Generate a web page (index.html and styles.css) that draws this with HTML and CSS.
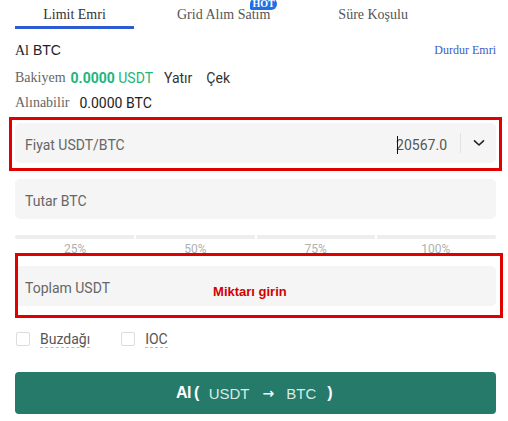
FILE: index.html
```html
<!DOCTYPE html>
<html lang="tr">
<head>
<meta charset="utf-8">
<title>Limit Emri</title>
<link rel="stylesheet" href="styles.css">
</head>
<body>
<div class="page">
  <div class="tabs">
    <div class="tab active">Limit Emri</div>
    <div class="tab tab-grid"><span class="tab-label">Grid Alım Satım<span class="hot">HOT</span></span></div>
    <div class="tab tab-time">Süre Koşulu</div>
  </div>

  <div class="row head-row">
    <span class="title"><span class="serif">Al</span> BTC</span>
    <span class="stop">Durdur Emri</span>
  </div>

  <div class="row bal-row">
    <span class="label">Bakiyem</span>
    <span class="green"><b>0.0000</b> USDT</span>
    <span class="act act-dep">Yatır</span>
    <span class="act act-wd">Çek</span>
  </div>

  <div class="row avail-row">
    <span class="label">Alınabilir</span>
    <span class="val">0.0000 BTC</span>
  </div>

  <div class="field field-price">
    <span class="ph">Fiyat USDT/BTC</span>
    <span class="price-val"><span class="caret"></span>20567.0</span>
    <span class="divider"></span>
    <svg class="chev" width="12" height="8" viewBox="0 0 12 8"><path d="M1.5 1.8 L6 6 L10.5 1.8" fill="none" stroke="#222" stroke-width="1.6" stroke-linecap="round" stroke-linejoin="round"/></svg>
  </div>

  <div class="field field-amount">
    <span class="ph">Tutar BTC</span>
  </div>

  <div class="slider">
    <div class="track"><span></span><span></span><span></span><span></span></div>
    <div class="marks"><span>25%</span><span>50%</span><span>75%</span><span>100%</span></div>
  </div>

  <div class="field field-total">
    <span class="ph">Toplam USDT</span>
    <span class="hint">Miktarı girin</span>
  </div>

  <div class="opts">
    <label class="opt"><span class="box"></span><span class="opt-text">Buzdağı</span></label>
    <label class="opt"><span class="box"></span><span class="opt-text">IOC</span></label>
  </div>

  <button class="buy"><b>Al</b><b class="paren">(</b><span class="coin">USDT</span><span class="arrow">→</span><span class="coin coin-b">BTC</span><b class="paren paren-r">)</b></button>

  <div class="mark mark-price"></div>
  <div class="mark mark-total"></div>
</div>
</body>
</html>
```

FILE: styles.css
```css
* { box-sizing: border-box; }
html, body { margin: 0; padding: 0; background: #fff; }
body { font-family: Roboto, "Liberation Sans", Arial, sans-serif; color: #333; }

.page {
  position: relative;
  width: 508px;
  height: 421px;
  padding: 0 12px 0 15px;
  overflow: hidden;
}

.tabs {
  display: flex;
  height: 29px;
  font-family: "Liberation Serif", "Times New Roman", serif;
  font-size: 14px;
}
.tab {
  padding-top: 4px;
  line-height: 22px;
  color: #555;
  white-space: nowrap;
}
.tab.active {
  width: 119px;
  text-align: center;
  color: #333;
  border-bottom: 3px solid #2c5bd2;
  height: 29px;
}
.tab-grid { margin-left: 43px; }
.tab-label { position: relative; }
.hot {
  position: absolute;
  left: 73px;
  top: -9px;
  width: 27px;
  height: 12px;
  background: #1f6fe6;
  color: #fff;
  font-weight: bold;
  font-size: 10px;
  line-height: 11px;
  text-align: center;
  border-radius: 7px 7px 7px 2px;
}
.tab-time { margin-left: 68px; }

.row { display: flex; align-items: center; height: 20px; white-space: nowrap; }
.head-row { margin-top: 11px; justify-content: space-between; }
.title { font-family: "Liberation Sans", Arial, sans-serif; font-size: 14px; color: #222; }
.serif { font-family: "Liberation Serif", "Times New Roman", serif; }
.stop { font-family: "Liberation Serif", "Times New Roman", serif; font-size: 12px; color: #3b5cc4; }

.bal-row { margin-top: 8px; }
.label { font-family: "Liberation Serif", "Times New Roman", serif; font-size: 14px; color: #666; }
.green { margin-left: 5px; color: #23b57a; font-size: 14px; }
.green b { font-weight: 700; }
.act { font-size: 14px; color: #333; }
.act-dep { margin-left: 11px; }
.act-wd { margin-left: 14px; }

.avail-row { margin-top: 5px; }
.val { margin-left: 10px; font-size: 14px; color: #222; }

.field {
  display: flex;
  align-items: center;
  height: 40px;
  background: #f5f5f5;
  border-radius: 5px;
  padding: 3px 10px 0;
}
.ph { font-size: 14px; color: #666; }
.field-price { margin-top: 10px; }
.price-val {
  margin-left: auto;
  position: relative;
  font-size: 14px;
  color: #555;
}
.caret {
  position: absolute;
  left: 1px;
  top: -1px;
  width: 1px;
  height: 18px;
  background: #111;
}
.divider { width: 1px; height: 20px; background: #e2e2e2; margin: -3px 12px 0 13px; }
.chev { margin: -3px 1px 0 0; }

.field-amount { margin-top: 16px; }

.slider { margin-top: 16px; }
.track { display: flex; gap: 2px; height: 4px; }
.track span { flex: 1; background: #eeeeee; }
.track span:first-child { border-radius: 2px 0 0 2px; }
.track span:last-child { border-radius: 0 2px 2px 0; }
.marks {
  display: flex;
  height: 14px;
  overflow: hidden;
  padding-top: 4px;
}
.marks span {
  flex: 1;
  text-align: center;
  font-size: 12px;
  line-height: 12px;
  color: #b0b0b0;
}

.field-total { margin-top: 13px; }
.hint {
  margin-left: 103px;
  margin-top: 8px;
  font-family: "Liberation Sans", Arial, sans-serif;
  font-weight: bold;
  font-size: 13px;
  color: #d30000;
}

.opts { display: flex; align-items: center; height: 20px; margin-top: 23px; }
.opt { display: flex; align-items: center; margin-right: 30px; }
.box {
  width: 14px;
  height: 14px;
  margin-left: 1px;
  border: 1px solid #dcdcdc;
  border-radius: 2px;
  background: #fff;
}
.opt-text {
  margin-left: 10px;
  font-size: 14px;
  line-height: 16px;
  color: #555;
  border-bottom: 1px dashed #bbb;
}

.buy {
  display: flex;
  align-items: center;
  justify-content: center;
  width: 100%;
  height: 42px;
  margin-top: 23px;
  border: 0;
  border-radius: 4px;
  background: #267a6a;
  color: #fff;
  font-family: "Liberation Sans", Arial, sans-serif;
  font-size: 16px;
  padding: 0 3px 0 0;
}
.buy b { font-weight: bold; letter-spacing: -0.5px; }
.buy .paren { margin-left: 3px; }
.buy .paren-r { margin-left: 11px; }
.coin { color: #d6ece5; font-size: 15px; margin-left: 10px; }
.coin-b { margin-left: 12px; }
.arrow {
  font-family: "DejaVu Sans", sans-serif;
  font-weight: bold;
  color: #f2f8f6;
  font-size: 14px;
  margin-left: 13px;
}

.mark {
  position: absolute;
  border: 3px solid #e00000;
  pointer-events: none;
}
.mark-price { left: 9px; top: 117px; width: 493px; height: 54px; }
.mark-total { left: 15px; top: 253px; width: 488px; height: 65px; }
```
